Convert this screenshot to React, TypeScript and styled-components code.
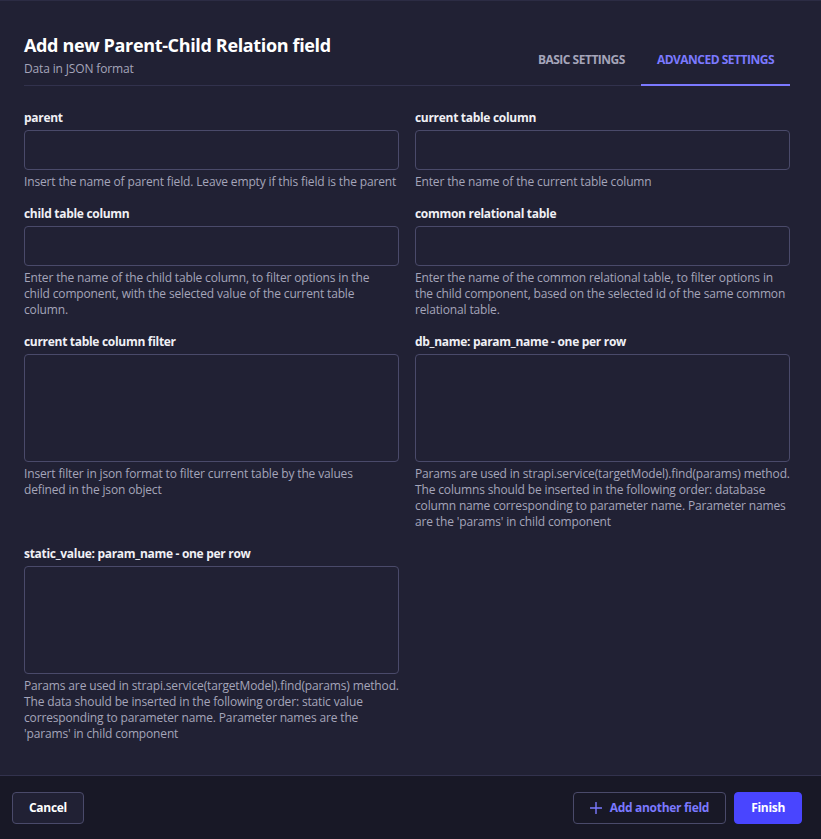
import styled, { createGlobalStyle } from 'styled-components'
import { useState } from 'react'

const GlobalStyle = createGlobalStyle`
  * {
    box-sizing: border-box;
  }
  body {
    margin: 0;
    background: #212134;
    font-family: "Open Sans", "Noto Sans", sans-serif;
  }
`

const Modal = styled.div`
  display: flex;
  flex-direction: column;
  width: 821px;
  height: 839px;
  background: #212134;
  border-top: 1px solid #2c2c44;
`

const Header = styled.div`
  display: flex;
  justify-content: space-between;
  align-items: flex-end;
  margin: 0 31px 0 24px;
  padding-top: 33px;
  border-bottom: 1px solid #32324d;
`

const TitleBlock = styled.div`
  display: flex;
  flex-direction: column;
  gap: 5px;
  padding-bottom: 8px;
`

const Title = styled.h2`
  margin: 0;
  font-size: 18px;
  line-height: 22px;
  font-weight: 700;
  letter-spacing: -0.35px;
  color: #ffffff;
`

const Subtitle = styled.span`
  font-size: 12px;
  line-height: 16px;
  letter-spacing: -0.15px;
  color: #a5a5ba;
`

const Tabs = styled.div`
  display: flex;
  margin-bottom: -1px;
`

const Tab = styled.button<{ $active?: boolean }>`
  padding: 0 16px 16px;
  border: none;
  border-bottom: 2px solid ${(p) => (p.$active ? '#7b79ff' : 'transparent')};
  background: none;
  font-family: inherit;
  font-size: 12px;
  line-height: 16px;
  font-weight: 700;
  letter-spacing: -0.5px;
  text-transform: uppercase;
  color: ${(p) => (p.$active ? '#7b79ff' : '#a5a5ba')};
  cursor: pointer;
`

const Body = styled.div`
  flex: 1;
  display: grid;
  grid-template-columns: 1fr 1fr;
  align-content: start;
  column-gap: 16px;
  row-gap: 16px;
  padding: 24px 31px 0 24px;
`

const Field = styled.div`
  display: flex;
  flex-direction: column;
  gap: 4px;
`

const Label = styled.label`
  font-size: 12px;
  line-height: 16px;
  font-weight: 700;
  letter-spacing: -0.3px;
  color: #f0f0f5;
`

const Input = styled.input`
  height: 40px;
  padding: 0 16px;
  border: 1px solid #4a4a6a;
  border-radius: 4px;
  background: #212134;
  font-family: inherit;
  font-size: 14px;
  color: #eaeaef;
  outline: none;
`

const TextArea = styled.textarea`
  height: 108px;
  padding: 12px 16px;
  border: 1px solid #4a4a6a;
  border-radius: 4px;
  background: #212134;
  font-family: inherit;
  font-size: 14px;
  color: #eaeaef;
  resize: none;
  outline: none;
`

const Hint = styled.p`
  margin: 0;
  font-size: 12px;
  line-height: 16px;
  letter-spacing: -0.15px;
  white-space: pre-line;
  color: #a5a5ba;
`

const Footer = styled.div`
  display: flex;
  justify-content: space-between;
  align-items: flex-start;
  height: 64px;
  padding: 16px 19px 0 12px;
  border-top: 1px solid #32324d;
  background: #181826;
`

const Actions = styled.div`
  display: flex;
  gap: 8px;
`

const Button = styled.button<{ $variant?: 'secondary' | 'tertiary' | 'primary' }>`
  display: flex;
  align-items: center;
  gap: 8px;
  height: 32px;
  padding: 0 16px;
  border-radius: 4px;
  border: 1px solid ${(p) => (p.$variant === 'primary' ? '#4945ff' : '#4a4a6a')};
  background: ${(p) =>
    p.$variant === 'primary' ? '#4945ff' : p.$variant === 'secondary' ? 'transparent' : '#212134'};
  font-family: inherit;
  font-size: 12px;
  line-height: 16px;
  font-weight: 700;
  letter-spacing: -0.3px;
  color: ${(p) => (p.$variant === 'secondary' ? '#7b79ff' : '#ffffff')};
  cursor: pointer;
  svg {
    width: 12px;
    height: 12px;
  }
`

type FieldDef = {
  name: string
  hint: string
  multiline?: boolean
}

const fields: FieldDef[] = [
  { name: 'parent', hint: 'Insert the name of parent field. Leave empty if this field is the parent' },
  { name: 'current table column', hint: 'Enter the name of the current table column' },
  {
    name: 'child table column',
    hint: 'Enter the name of the child table column, to filter options in the\nchild component, with the selected value of the current table\ncolumn.',
  },
  {
    name: 'common relational table',
    hint: 'Enter the name of the common relational table, to filter options in the child component, based on the selected id of the same common relational table.',
  },
  {
    name: 'current table column filter',
    hint: 'Insert filter in json format to filter current table by the values\ndefined in the json object',
    multiline: true,
  },
  {
    name: 'db_name: param_name - one per row',
    hint: "Params are used in strapi.service(targetModel).find(params) method. The columns should be inserted in the following order: database column name corresponding to parameter name. Parameter names are the 'params' in child component",
    multiline: true,
  },
  {
    name: 'static_value: param_name - one per row',
    hint: "Params are used in strapi.service(targetModel).find(params) method. The data should be inserted in the following order: static value corresponding to parameter name. Parameter names are the 'params' in child component",
    multiline: true,
  },
]

export default function App() {
  const [tab, setTab] = useState('advanced')
  return (
    <>
      <GlobalStyle />
      <Modal>
        <Header>
          <TitleBlock>
            <Title>Add new Parent-Child Relation field</Title>
            <Subtitle>Data in JSON format</Subtitle>
          </TitleBlock>
          <Tabs>
            <Tab $active={tab === 'basic'} onClick={() => setTab('basic')}>Basic settings</Tab>
            <Tab $active={tab === 'advanced'} onClick={() => setTab('advanced')}>Advanced settings</Tab>
          </Tabs>
        </Header>
        <Body>
          {fields.map((f) => (
            <Field key={f.name}>
              <Label>{f.name}</Label>
              {f.multiline ? <TextArea /> : <Input type="text" />}
              <Hint>{f.hint}</Hint>
            </Field>
          ))}
        </Body>
        <Footer>
          <Button>Cancel</Button>
          <Actions>
            <Button $variant="secondary">
              <svg viewBox="0 0 24 24" fill="currentColor" aria-hidden="true">
                <path d="M24 13.1a.3.3 0 0 1-.3.3h-10.3V23.7a.3.3 0 0 1-.3.3h-2.2a.3.3 0 0 1-.3-.3V13.4H.3a.3.3 0 0 1-.3-.3v-2.2a.3.3 0 0 1 .3-.3h10.3V.3a.3.3 0 0 1 .3-.3h2.2a.3.3 0 0 1 .3.3v10.3h10.3a.3.3 0 0 1 .3.3v2.2Z" />
              </svg>
              Add another field
            </Button>
            <Button $variant="primary">Finish</Button>
          </Actions>
        </Footer>
      </Modal>
    </>
  )
}
